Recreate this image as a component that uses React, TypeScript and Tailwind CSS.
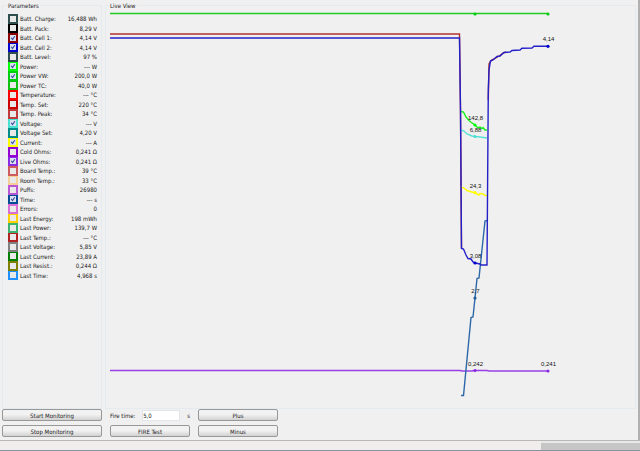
const parameters = [
  { name: 'Batt. Charge:', value: '16,488 Wh', color: '#2f4f4f', checked: false },
  { name: 'Batt. Pack:', value: '8,29 V', color: '#000000', checked: false },
  { name: 'Batt. Cell 1:', value: '4,14 V', color: '#8b0000', checked: true },
  { name: 'Batt. Cell 2:', value: '4,14 V', color: '#0000cd', checked: true },
  { name: 'Batt. Level:', value: '97 %', color: '#2f4f4f', checked: false },
  { name: 'Power:', value: '--- W', color: '#00ff00', checked: true },
  { name: 'Power VW:', value: '200,0 W', color: '#00cc10', checked: true },
  { name: 'Power TC:', value: '40,0 W', color: '#10c010', checked: false },
  { name: 'Temperature:', value: '--- °C', color: '#ff0000', checked: false },
  { name: 'Temp. Set:', value: '220 °C', color: '#cc0000', checked: false },
  { name: 'Temp. Peak:', value: '34 °C', color: '#c03c3c', checked: false },
  { name: 'Voltage:', value: '--- V', color: '#48e0d0', checked: true },
  { name: 'Voltage Set:', value: '4,20 V', color: '#008b8b', checked: false },
  { name: 'Current:', value: '--- A', color: '#ffff00', checked: true },
  { name: 'Cold Ohms:', value: '0,241 Ω', color: '#9400d3', checked: false },
  { name: 'Live Ohms:', value: '0,241 Ω', color: '#8a2be2', checked: true },
  { name: 'Board Temp.:', value: '39 °C', color: '#cd5c5c', checked: false },
  { name: 'Room Temp.:', value: '33 °C', color: '#f5cf96', checked: false },
  { name: 'Puffs:', value: '26980', color: '#ba55d3', checked: false },
  { name: 'Time:', value: '--- s', color: '#004c98', checked: true },
  { name: 'Errors:', value: '0', color: '#da70d6', checked: false },
  { name: 'Last Energy:', value: '198 mWh', color: '#ffd000', checked: false },
  { name: 'Last Power:', value: '139,7 W', color: '#3cb371', checked: false },
  { name: 'Last Temp.:', value: '--- °C', color: '#b22222', checked: false },
  { name: 'Last Voltage:', value: '5,85 V', color: '#808080', checked: false },
  { name: 'Last Current:', value: '23,89 A', color: '#008000', checked: false },
  { name: 'Last Resist.:', value: '0,244 Ω', color: '#808000', checked: false },
  { name: 'Last Time:', value: '4,968 s', color: '#1e90ff', checked: false },
];

const series = [
  { color: '#20cc20', points: '110,13.5 548,13.5' },
  { color: '#b03030', points: '110,34 459.5,34 460.5,110 461.5,248' },
  { color: '#b03030', points: '488.3,100 489,64 491,60.5 494,59 500,55.5 503,53 506,52' },
  { color: '#18f018', points: '461,111.5 463.5,112 466,117 470,121.5 475,125 478,128 480,127 482,128.5 483,127.5 485,130 487,130' },
  { color: '#58e0d8', points: '461,130 464,131 467,134 472,136 475,136.5 480,137 487,138' },
  { color: '#ffff00', points: '461,187 464,188 467,190.5 472,192 475,193 479,195 480,193.5 483,194 485,195.5 487,195.5' },
  { color: '#9840e8', points: '110,370.5 460,370.5 462,371 472,371 474,370.5 487,370.5 489,371 548,371' },
  { color: '#2c68a8', points: '461,395.5 463.5,395.5 471,317.5 473,317 475,298 477,278.5 479,278 485,221 487,220.5' },
  {
    color: '#2420c8',
    points:
      '110,38 459.5,38 460.5,110 461.5,248.5 463.5,249 466,255 468,258.5 471,259 473,262 475,263 480,264 481,265 487,265 488.3,90 489,70 490.5,61 493,60 497,56.5 500,56 504,52.5 510,52 512,50.5 520,50 522,48.3 532,48 534,46.3 548,46.3',
  },
];

const markers = [
  { x: 475, y: 14, color: '#00cc10' },
  { x: 548, y: 14, color: '#00cc10' },
  { x: 475, y: 125, color: '#00ff00', label: '142,8' },
  { x: 475, y: 136.5, color: '#48e0d0', label: '6,88' },
  { x: 475, y: 192.5, color: '#ffff00', label: '24,3' },
  { x: 475, y: 263, color: '#0000cd', label: '3,08' },
  { x: 475, y: 298, color: '#1e5a9c', label: '2,7' },
  { x: 475, y: 370.5, color: '#8a2be2', label: '0,242' },
  { x: 548, y: 371, color: '#8a2be2', label: '0,241' },
  { x: 548, y: 46.3, color: '#0000cd', label: '4,14' },
];

function Button({ children }: { children: string }) {
  return (
    <button
      type="button"
      className="h-3 w-full rounded-xs border border-[#989898] bg-linear-to-b from-[#f2f2f2] from-45% to-[#d2d2d2] flex items-center justify-center"
    >
      {children}
    </button>
  );
}

function Parameters() {
  return (
    <fieldset className="w-[100px] shrink-0 border border-[#e4eaee] pl-[5px] pr-1 pb-32">
      <legend className="h-[11px] leading-[11px] pr-px">Parameters</legend>
      <ul className="grid auto-rows-fr h-[269px] pt-[3px]">
        {parameters.map((item) => (
          <li key={item.name}>
            <label className="h-full flex items-center">
              <span className="self-stretch w-[10px] flex items-center justify-center" style={{ backgroundColor: item.color }}>
                <input
                  type="checkbox"
                  defaultChecked={item.checked}
                  className="peer appearance-none size-[6px] bg-[#e9e9e9] checked:bg-[#dce2f0]"
                />
                <svg viewBox="0 0 6 6" className="hidden peer-checked:block absolute size-[6px] pointer-events-none">
                  <path d="M1.2 2.8 2.5 4.6 4.8 1.2" fill="none" stroke="#34489c" strokeWidth="1.1" />
                </svg>
              </span>
              <span className="pl-[2px] flex-1">{item.name}</span>
              <span>{item.value}</span>
            </label>
          </li>
        ))}
      </ul>
    </fieldset>
  );
}

function LiveView() {
  return (
    <fieldset className="flex-1 min-w-0 border border-[#e4eaee]">
      <legend className="ml-[3px] px-px h-[11px] leading-[11px]">Live View</legend>
      <svg viewBox="106 11 529 395" className="block w-full h-auto font-['Liberation_Sans',sans-serif]" role="img" aria-label="Live View">
        {series.map((line) => (
          <polyline key={line.points} points={line.points} fill="none" stroke={line.color} strokeWidth="1.4" />
        ))}
        {markers.map((m) => (
          <g key={`${m.x}-${m.y}`}>
            <circle cx={m.x} cy={m.y} r="1.6" fill={m.color} />
            {m.label && (
              <text x={m.x + 0.5} y={m.y - 5} textAnchor="middle" fontSize="6" fill="#111">
                {m.label}
              </text>
            )}
          </g>
        ))}
      </svg>
    </fieldset>
  );
}

export default function App() {
  return (
    <div className="bg-[#f0f0f0] text-[#202020] text-[6px] leading-[9px] font-['DejaVu_Sans_Condensed','DejaVu_Sans',sans-serif]">
      <div className="border-r-2 border-[#b0b0b0] px-[2px] pb-[3px]">
        <main className="flex gap-[3px]">
          <Parameters />
          <LiveView />
        </main>

        <form className="flex gap-2" onSubmit={(e) => e.preventDefault()}>
          <div className="w-[100px] flex flex-col gap-1">
            <Button>Start Monitoring</Button>
            <Button>Stop Monitoring</Button>
          </div>
          <div className="w-20 flex flex-col gap-1">
            <div className="h-3 flex items-center justify-between">
              <label htmlFor="fire-time">Fire time:</label>
              <div className="flex items-center gap-[7px]">
                <input id="fire-time" defaultValue="5,0" className="w-[38px] h-[11px] bg-white border border-[#e2e6ea]" />
                <span>s</span>
              </div>
            </div>
            <Button>FIRE Test</Button>
          </div>
          <div className="w-20 flex flex-col gap-1">
            <Button>Plus</Button>
            <Button>Minus</Button>
          </div>
        </form>
      </div>

      <footer className="flex h-[11px] border-t border-[#b8b8b8] border-b border-b-[#8494a0] bg-[#f1eded]">
        <div className="flex-1" />
        <div className="w-[99px] border-t-2 border-[#e8e8e8] bg-[#c6c6c6]" />
      </footer>
    </div>
  );
}
